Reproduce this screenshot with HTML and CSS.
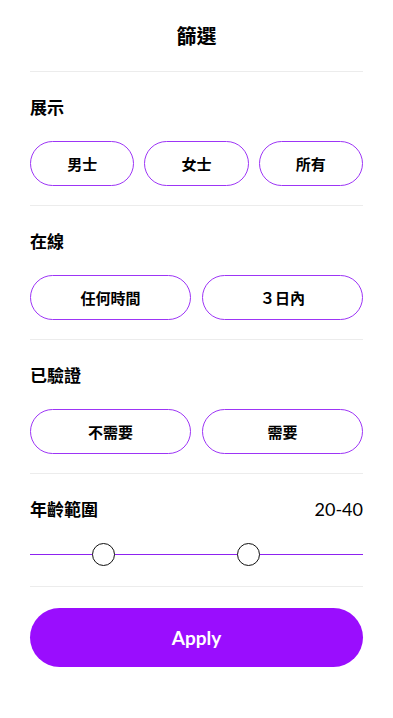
FILE: index.html
```html
<!DOCTYPE html>
<html lang="zh-Hant">
<head>
<meta charset="utf-8">
<meta name="viewport" content="width=device-width, initial-scale=1">
<title>篩選</title>
<link rel="stylesheet" href="styles.css">
</head>
<body>
<div class="page">
  <header class="header">篩選</header>

  <section class="section">
    <h2 class="label">展示</h2>
    <div class="options three">
      <button class="chip">男士</button>
      <button class="chip">女士</button>
      <button class="chip">所有</button>
    </div>
  </section>

  <section class="section">
    <h2 class="label">在線</h2>
    <div class="options two">
      <button class="chip">任何時間</button>
      <button class="chip">３日內</button>
    </div>
  </section>

  <section class="section">
    <h2 class="label">已驗證</h2>
    <div class="options two">
      <button class="chip">不需要</button>
      <button class="chip">需要</button>
    </div>
  </section>

  <section class="section">
    <div class="label-row">
      <h2 class="label">年齡範圍</h2>
      <span class="value">20-40</span>
    </div>
    <div class="slider">
      <div class="track"></div>
      <div class="thumb thumb-min"></div>
      <div class="thumb thumb-max"></div>
    </div>
  </section>

  <button class="apply">Apply</button>
</div>
</body>
</html>
```

FILE: styles.css
```css
* { box-sizing: border-box; }
html, body { margin: 0; padding: 0; background: #fff; }
body {
  font-family: "Noto Sans CJK TC", "Noto Sans", sans-serif;
  color: #000;
}
.page {
  padding: 0 30px;
}
.header {
  height: 72px;
  padding-bottom: 1px;
  display: flex;
  align-items: center;
  justify-content: center;
  font-size: 20px;
  font-weight: 700;
  border-bottom: 1px solid #ececec;
}
.section {
  padding: 23px 0 19px;
  border-bottom: 1px solid #ececec;
}
.label {
  margin: 0;
  font-size: 17px;
  font-weight: 700;
  line-height: 24px;
}
.label-row {
  display: flex;
  justify-content: space-between;
  align-items: center;
}
.value {
  font-family: "Lato", "Noto Sans", sans-serif;
  font-size: 18px;
  font-weight: 400;
  line-height: 24px;
}
.options {
  margin-top: 22px;
  display: grid;
  gap: 11px;
}
.options.three { grid-template-columns: repeat(3, 1fr); gap: 10px; }
.options.two { grid-template-columns: repeat(2, 1fr); }
.chip {
  height: 45px;
  border: 1.3px solid #9d35f6;
  border-radius: 23px;
  background: #fff;
  font-family: "Noto Sans CJK TC", sans-serif;
  font-size: 15px;
  font-weight: 700;
  color: #000;
  padding: 0;
}
.slider {
  position: relative;
  margin-top: 22px;
  height: 24px;
}
.track {
  position: absolute;
  left: 0;
  right: 0;
  top: 11px;
  height: 1px;
  background: #8d22f0;
}
.thumb {
  position: absolute;
  top: 0;
  width: 23px;
  height: 23px;
  border-radius: 50%;
  background: #fff;
  border: 1px solid #111;
}
.thumb-min { left: 62px; }
.thumb-max { left: 207px; }
.apply {
  display: block;
  width: 100%;
  height: 59px;
  margin-top: 21px;
  border: 0;
  border-radius: 30px;
  background: #9a0dfe;
  color: #fff;
  font-family: "Lato", "Noto Sans", sans-serif;
  font-size: 19px;
  font-weight: 700;
}
```
